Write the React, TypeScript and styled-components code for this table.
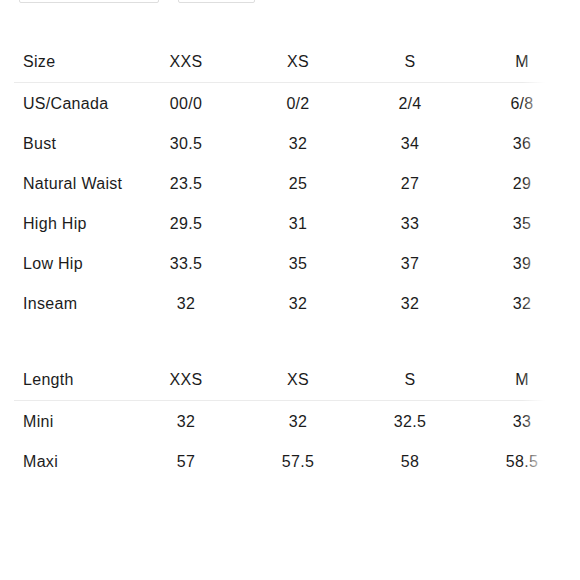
import React from "react";
import styled, { createGlobalStyle } from "styled-components";

const GlobalStyle = createGlobalStyle`
  html, body {
    margin: 0;
    padding: 0;
    background: #ffffff;
  }
  body {
    font-family: "Liberation Sans", Arial, Helvetica, sans-serif;
    color: #1c1c1c;
    -webkit-font-smoothing: antialiased;
  }
`;

const Page = styled.div`
  width: 580px;
  height: 580px;
  overflow: hidden;
  background: #fff;
`;

const Selects = styled.div`
  display: flex;
  gap: 19px;
  padding-left: 19px;
  margin-top: -27px;
`;

const SelectBox = styled.div<{ w: number }>`
  width: ${p => p.w}px;
  height: 30px;
  box-sizing: border-box;
  border: 1px solid #dedede;
  border-radius: 2px;
  background: #fff;
`;

const Tables = styled.div`
  display: flex;
  flex-direction: column;
  gap: 36px;
  margin-top: 39px;
`;

const Scroller = styled.div`
  position: relative;
  width: 532px;
  margin-left: 14px;
  overflow: hidden;

  &::after {
    content: "";
    position: absolute;
    top: 0;
    right: 0;
    bottom: 0;
    width: 24px;
    background: linear-gradient(to right, rgba(255,255,255,0), #fff 95%);
    pointer-events: none;
  }
`;

const Table = styled.div`
  width: 570px;
`;

const Row = styled.div<{ head?: boolean }>`
  display: grid;
  grid-template-columns: 116px repeat(4, 112px);
  height: 40px;
  align-items: center;
  font-size: 16px;
  line-height: 20px;
  letter-spacing: 0.3px;
  border-bottom: ${p => (p.head ? "1px solid #ebebeb" : "none")};
  margin-bottom: ${p => (p.head ? "1px" : "0")};
`;

const Label = styled.div`
  padding-left: 9px;
  white-space: nowrap;
`;

const Cell = styled.div`
  text-align: center;
  white-space: nowrap;
`;

type Chart = { head: string[]; rows: string[][] };

const bodyChart: Chart = {
  head: ["Size", "XXS", "XS", "S", "M"],
  rows: [
    ["US/Canada", "00/0", "0/2", "2/4", "6/8"],
    ["Bust", "30.5", "32", "34", "36"],
    ["Natural Waist", "23.5", "25", "27", "29"],
    ["High Hip", "29.5", "31", "33", "35"],
    ["Low Hip", "33.5", "35", "37", "39"],
    ["Inseam", "32", "32", "32", "32"],
  ],
};

const lengthChart: Chart = {
  head: ["Length", "XXS", "XS", "S", "M"],
  rows: [
    ["Mini", "32", "32", "32.5", "33"],
    ["Maxi", "57", "57.5", "58", "58.5"],
  ],
};

const SizeTable = ({ chart }: { chart: Chart }) => (
  <Scroller>
    <Table>
      <Row head>
        <Label>{chart.head[0]}</Label>
        {chart.head.slice(1).map(h => <Cell key={h}>{h}</Cell>)}
      </Row>
      {chart.rows.map(r => (
        <Row key={r[0]}>
          <Label>{r[0]}</Label>
          {r.slice(1).map((v, i) => <Cell key={i}>{v}</Cell>)}
        </Row>
      ))}
    </Table>
  </Scroller>
);

export default function App() {
  return (
    <Page>
      <GlobalStyle />
      <Selects>
        <SelectBox w={140} />
        <SelectBox w={77} />
      </Selects>
      <Tables>
        <SizeTable chart={bodyChart} />
        <SizeTable chart={lengthChart} />
      </Tables>
    </Page>
  );
}
